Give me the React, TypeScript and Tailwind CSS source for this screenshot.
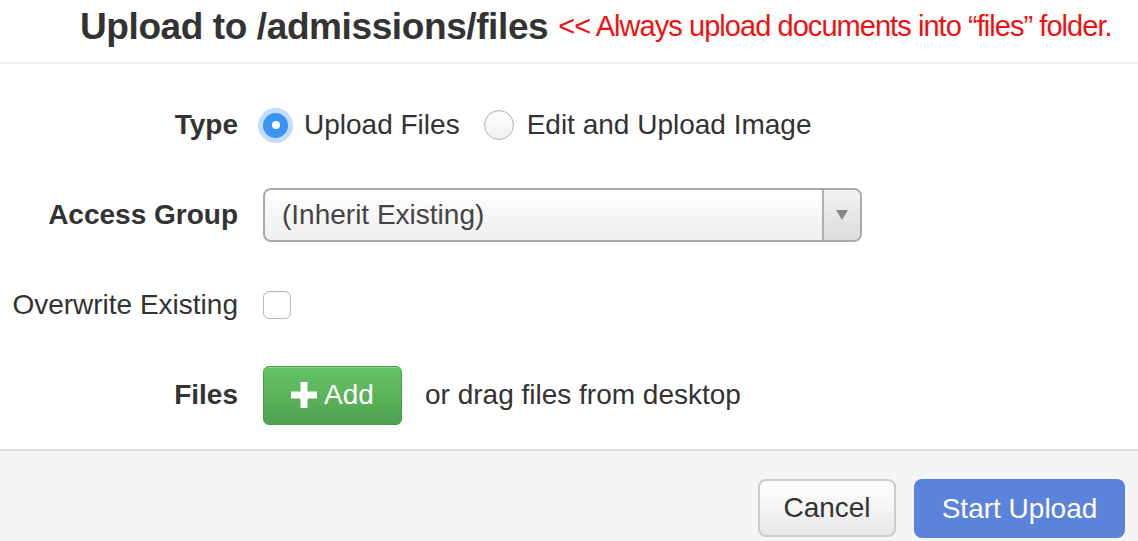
import React from 'react';

const font = { fontFamily: '"Liberation Sans", Arial, sans-serif' };

const FormRow: React.FC<{ label: string; bold?: boolean; children: React.ReactNode }> = ({ label, bold = true, children }) => (
  <div className="flex h-[60px] items-center">
    <div className={`w-[238px] shrink-0 text-right text-[28px] text-[#333] ${bold ? 'font-bold' : ''}`}>{label}</div>
    <div className="ml-[25px] flex items-center">{children}</div>
  </div>
);

const App: React.FC = () => {
  return (
    <div className="h-[541px] w-[1138px] overflow-hidden bg-white" style={font}>
      {/* header */}
      <div className="flex h-[64px] items-center border-b-2 border-[#eeeeee] pb-[10px] pl-[80px]">
        <h3 className="text-[37px] font-bold leading-none tracking-[-0.4px] text-[#333]">Upload to /admissions/files</h3>
        <span className="ml-[10px] text-[29px] leading-none tracking-[-0.95px] text-[#ee1111]">
          &lt;&lt; Always upload documents into “files” folder.
        </span>
      </div>

      {/* body */}
      <div className="flex flex-col gap-[30px] pb-[24px] pt-[31px]">
        <FormRow label="Type">
          <label className="-ml-[5px] flex items-center text-[28px] text-[#333]">
            <span className="flex h-[35px] w-[35px] items-center justify-center rounded-full bg-[#c3ddfb]">
              <span className="flex h-[25px] w-[25px] items-center justify-center rounded-full bg-[#3b93f5]">
                <span className="h-[8px] w-[8px] rounded-full bg-white" />
              </span>
            </span>
            <span className="ml-[11px]">Upload Files</span>
          </label>
          <label className="ml-[24px] flex items-center text-[28px] text-[#333]">
            <span className="h-[30px] w-[30px] rounded-full border border-[#b5b5b5] bg-gradient-to-b from-white to-[#f0f0f0] shadow-[inset_0_1px_1px_rgba(0,0,0,0.08)]" />
            <span className="ml-[13px]">Edit and Upload Image</span>
          </label>
        </FormRow>

        <FormRow label="Access Group">
          <div className="flex h-[54px] w-[599px] overflow-hidden rounded-[8px] border-2 border-[#aaaaaa] bg-gradient-to-b from-white to-[#efefef]">
            <div className="flex flex-1 items-center pl-[17px] text-[28px] text-[#444]">(Inherit Existing)</div>
            <div className="flex w-[38px] items-center justify-center border-l-2 border-[#b0b0b0] bg-gradient-to-b from-[#f2f2f2] to-[#dcdcdc]">
              <svg width="12" height="10" viewBox="0 0 12 10">
                <path d="M0 0 H12 L6 10 Z" fill="#888" />
              </svg>
            </div>
          </div>
        </FormRow>

        <FormRow label="Overwrite Existing" bold={false}>
          <span className="h-[28px] w-[28px] rounded-[6px] border border-[#b8b8b8] bg-white shadow-[inset_0_1px_1px_rgba(0,0,0,0.06)]" />
        </FormRow>

        <FormRow label="Files">
          <button className="flex h-[59px] w-[139px] items-center justify-center rounded-[6px] border border-[#4a9a4a] bg-gradient-to-b from-[#66c466] to-[#4fa34f] text-[28px] text-white shadow-[inset_0_1px_0_rgba(255,255,255,0.25)]">
            <svg width="26" height="26" viewBox="0 0 26 26" className="mr-[7px]">
              <path d="M9.5 0 H16.5 V9.5 H26 V16.5 H16.5 V26 H9.5 V16.5 H0 V9.5 H9.5 Z" fill="#fff" />
            </svg>
            Add
          </button>
          <span className="ml-[23px] text-[28px] text-[#333]">or drag files from desktop</span>
        </FormRow>
      </div>

      {/* footer */}
      <div className="flex h-[92px] justify-end gap-[18px] border-t-2 border-[#dddddd] bg-[#f5f5f5] pr-[13px] pt-[28px]">
        <button className="h-[58px] w-[138px] rounded-[8px] border-2 border-[#cccccc] bg-gradient-to-b from-white to-[#e8e8e8] text-[28px] text-[#333]">
          Cancel
        </button>
        <button className="h-[59px] w-[211px] rounded-[8px] bg-[#5b83da] text-[28px] text-white">Start Upload</button>
      </div>
    </div>
  );
};

export default App;
